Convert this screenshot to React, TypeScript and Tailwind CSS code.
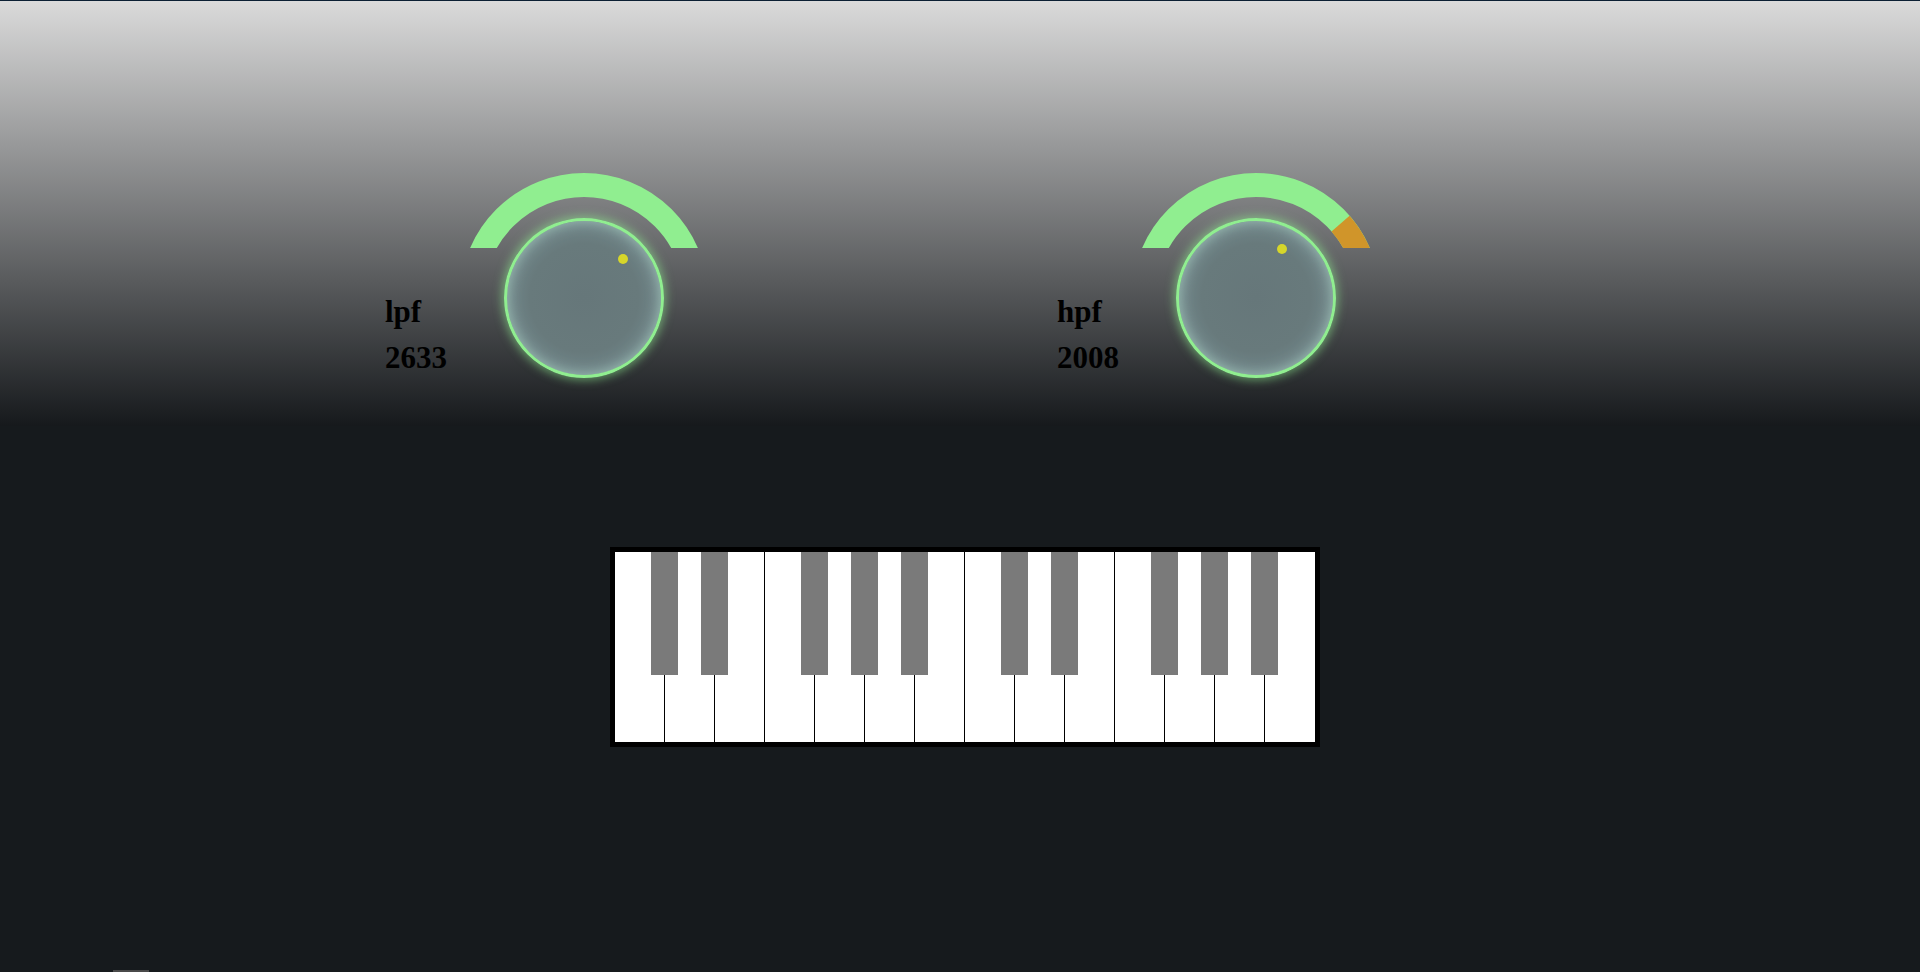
import React from "react";

const R_OUT = 124;
const R_IN = 100;
const C = 124;

function pt(r: number, deg: number) {
  const a = (deg * Math.PI) / 180;
  return [C + r * Math.cos(a), C - r * Math.sin(a)];
}

function Wedge({ from, to }: { from: number; to: number }) {
  const [x1, y1] = pt(R_OUT, from);
  const [x2, y2] = pt(R_OUT, to);
  const [x3, y3] = pt(R_IN, to);
  const [x4, y4] = pt(R_IN, from);
  const d = `M ${x1} ${y1} A ${R_OUT} ${R_OUT} 0 0 1 ${x2} ${y2} L ${x3} ${y3} A ${R_IN} ${R_IN} 0 0 0 ${x4} ${y4} Z`;
  return <path d={d} fill="#d0952a" />;
}

function Knob({
  label,
  value,
  dotAngle,
  orangeFrom,
}: {
  label: string;
  value: string;
  dotAngle: number;
  orangeFrom?: number;
}) {
  const a = (dotAngle * Math.PI) / 180;
  const dx = 55 * Math.cos(a);
  const dy = -55 * Math.sin(a);
  return (
    <div className="flex items-start">
      <div className="w-[75px] pt-[116px] font-['Liberation_Serif',serif] text-[31px] font-bold leading-[46px] text-black">
        <div>{label}</div>
        <div>{value}</div>
      </div>
      <div className="flex w-[248px] flex-col items-center">
        <svg width="248" height="75" viewBox="0 0 248 75" className="block">
          <circle cx={C} cy={C} r={112} fill="none" stroke="#90ee90" strokeWidth={24} />
          {orangeFrom !== undefined && <Wedge from={orangeFrom} to={-20} />}
        </svg>
        <div className="relative -mt-[30px] h-[160px] w-[160px] rounded-full border-[3px] border-[#90ee90] bg-[radial-gradient(circle,#66777a_0%,#687a7c_50%,#809aa0_100%)] shadow-[0_0_10px_2px_rgba(144,238,144,0.55),inset_0_0_14px_rgba(190,235,215,0.6)]">
          <div
            className="absolute h-[10px] w-[10px] rounded-full bg-[#d6d62a]"
            style={{ left: 77 + dx - 5, top: 77 + dy - 5 }}
          />
        </div>
      </div>
    </div>
  );
}

const blackAt = [1, 2, 4, 5, 6, 8, 9, 11, 12, 13];

export default function App() {
  return (
    <div className="flex h-[972px] w-full flex-col overflow-hidden bg-[#161a1d]">
      <div className="h-px w-full bg-[#0b1f33]" />
      <div className="h-[425px] w-full bg-[linear-gradient(to_bottom,#dadada_0%,#16191c_100%)] pl-[385px] pt-[172px]">
        <div className="flex gap-[349px]">
          <Knob label="lpf" value="2633" dotAngle={45} />
          <Knob label="hpf" value="2008" dotAngle={62} orangeFrom={41} />
        </div>
      </div>
      <div className="ml-[610px] mt-[121px] w-[710px] border-[5px] border-black bg-white">
        <div className="relative flex h-[190px]">
          {Array.from({ length: 14 }).map((_, i) => (
            <div
              key={i}
              className={i < 13 ? "h-full w-[50px] border-r border-black bg-white" : "h-full w-[50px] bg-white"}
            />
          ))}
          {blackAt.map((b) => (
            <div
              key={b}
              className="absolute top-0 h-[123px] w-[27px] bg-[#7a7a7a]"
              style={{ left: b * 50 - 14 }}
            />
          ))}
        </div>
      </div>
      <div className="mt-auto ml-[113px] h-[2px] w-[36px] bg-[#4a4a4a]" />
    </div>
  );
}
